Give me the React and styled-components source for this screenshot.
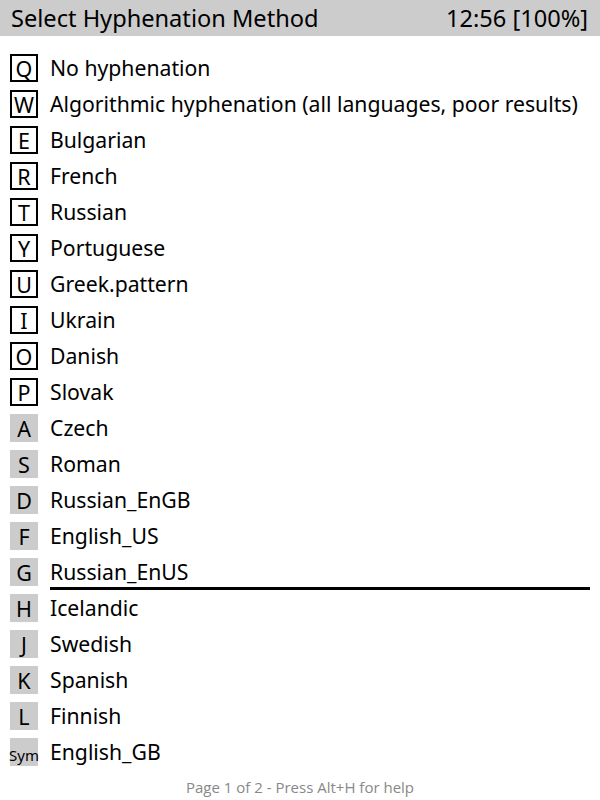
import React from "react";
import styled, { createGlobalStyle } from "styled-components";

const GlobalStyle = createGlobalStyle`
  html, body {
    margin: 0;
    padding: 0;
    background: #fff;
  }
  body {
    font-family: "Noto Sans", "Open Sans", sans-serif;
    color: #000;
  }
`;

const Screen = styled.div`
  width: 600px;
  height: 800px;
  display: flex;
  flex-direction: column;
  overflow: hidden;
`;

const TitleBar = styled.div`
  height: 36px;
  background: #cccccc;
  display: flex;
  align-items: center;
  justify-content: space-between;
  padding: 0 12px 0 11px;
  font-size: 23.6px;
`;

const MenuList = styled.div`
  display: flex;
  flex-direction: column;
  padding: 14px 10px 0 10px;
`;

const MenuRow = styled.div`
  height: 36px;
  display: flex;
  align-items: center;
  gap: 12px;
`;

const KeyBox = styled.span`
  width: 28px;
  height: 28px;
  box-sizing: border-box;
  display: flex;
  align-items: center;
  justify-content: center;
  flex-shrink: 0;
  font-size: ${(p) => (p.small ? "15px" : "21.5px")};
  padding-top: ${(p) => (p.small ? "5px" : "1px")};
  border: ${(p) => (p.filled ? "none" : "2px solid #000")};
  background: ${(p) => (p.filled ? "#cccccc" : "transparent")};
`;

const Label = styled.span`
  flex: 1;
  height: 36px;
  box-sizing: border-box;
  display: flex;
  align-items: center;
  font-size: 21.2px;
  white-space: nowrap;
  border-bottom: ${(p) => (p.selected ? "3px solid #000" : "3px solid transparent")};
  padding-top: 1px;
`;

const Footer = styled.div`
  margin-top: auto;
  height: 22px;
  padding-bottom: 1px;
  text-align: center;
  font-family: "Open Sans", "Noto Sans", sans-serif;
  font-size: 15px;
  color: #888;
`;

const items = [
  ["Q", "No hyphenation"],
  ["W", "Algorithmic hyphenation (all languages, poor results)"],
  ["E", "Bulgarian"],
  ["R", "French"],
  ["T", "Russian"],
  ["Y", "Portuguese"],
  ["U", "Greek.pattern"],
  ["I", "Ukrain"],
  ["O", "Danish"],
  ["P", "Slovak"],
  ["A", "Czech", true],
  ["S", "Roman", true],
  ["D", "Russian_EnGB", true],
  ["F", "English_US", true],
  ["G", "Russian_EnUS", true],
  ["H", "Icelandic", true],
  ["J", "Swedish", true],
  ["K", "Spanish", true],
  ["L", "Finnish", true],
  ["Sym", "English_GB", true],
];

export default function App() {
  return (
    <Screen>
      <GlobalStyle />
      <TitleBar>
        <span>Select Hyphenation Method</span>
        <span>12:56 [100%]</span>
      </TitleBar>
      <MenuList>
        {items.map(([key, label, filled]) => (
          <MenuRow key={key}>
            <KeyBox filled={filled} small={key.length > 1}>
              {key}
            </KeyBox>
            <Label selected={label === "Russian_EnUS"}>{label}</Label>
          </MenuRow>
        ))}
      </MenuList>
      <Footer>Page 1 of 2 - Press Alt+H for help</Footer>
    </Screen>
  );
}
